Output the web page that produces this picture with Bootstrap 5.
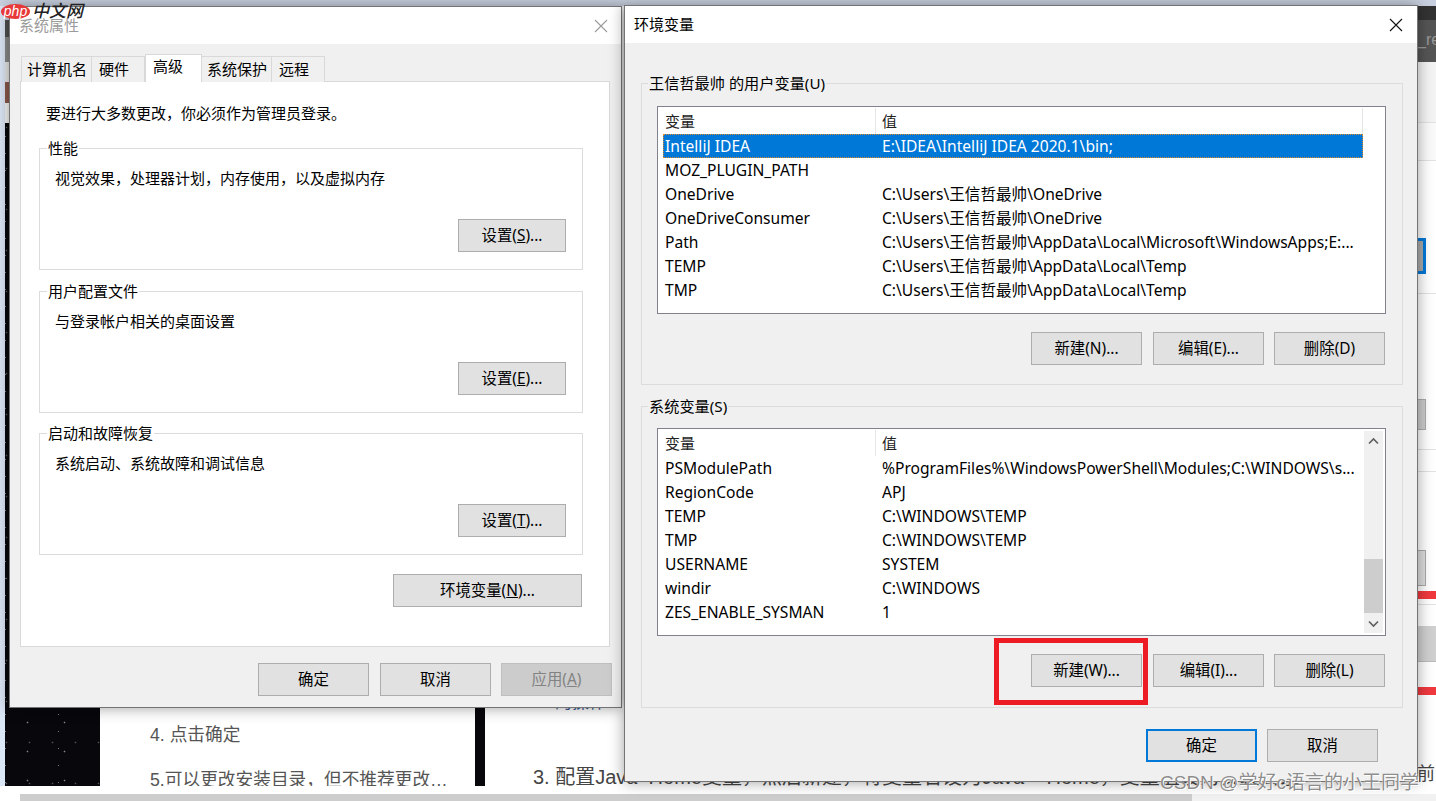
<!DOCTYPE html>
<html lang="zh-CN">
<head>
<meta charset="utf-8">
<title>环境变量</title>
<link href="https://cdn.jsdelivr.net/npm/bootstrap@5.3.0/dist/css/bootstrap.min.css" rel="stylesheet">
<style>
html,body{height:801px;overflow:hidden;background:#fff;}
body{position:relative;font-family:"Noto Sans","Noto Sans CJK SC",sans-serif;font-size:15px;color:#000;}
.top-strip{height:6px;background:#c9d1e0;}
.desk-main{height:780px;overflow:hidden;}
.left-edge{width:5px;background:#dbe6f6;}
.left-col{width:95px;background-color:#07070c;
 background-image:radial-gradient(circle,#8a8a8a 0 .7px,transparent 1.1px),radial-gradient(circle,#555 0 .7px,transparent 1.1px),radial-gradient(circle,#777 0 .6px,transparent 1px);
 background-size:37px 29px,23px 41px,53px 17px;background-position:4px 6px,13px 19px,27px 3px;}
.lc-a{height:14px;background:#c9d1e0;}
.lc-b{height:17px;background:#505050;}
.lc-c{height:25px;background:#8a8a8a;}
.lc-d{height:20px;background:#e8e8e8;}
.lc-e{height:21px;background:#8b5a4a;}
.lc-f{height:20px;background:#f6f6f6;}
.article-a{width:375px;background:#fff;padding:716px 0 0 50px;font-family:"Liberation Sans","Noto Sans CJK SC",sans-serif;font-size:17.7px;color:#555;line-height:26px;}
.article-a p{margin:0 0 19px;white-space:nowrap;}
.black-gap{width:10px;background:#07070c;}
.article-b{flex:1 1 auto;min-width:0;background:#fff;}
.article-b-text{width:932px;overflow:hidden;padding:684px 0 0 48px;font-family:"Liberation Sans","Noto Sans CJK SC",sans-serif;}
.frag{font-size:17px;line-height:26px;color:#3a5a90;margin:0 0 47px 22px;}
.long-line{font-size:20px;line-height:28px;color:#444;white-space:nowrap;margin:0;}
.right-col{width:19px;flex:none;overflow:hidden;background:#fff;font-family:"Liberation Sans","Noto Sans CJK SC",sans-serif;}
.rc-a{height:14px;background:#333;}
.rc-b{height:42px;background:#555;color:#999;font-size:16px;line-height:40px;white-space:nowrap;}
.rc-c{height:61px;background:#f4f4f4;border-bottom:1px solid #e2e2e2;}
.rc-d{height:38px;background:#fafafa;border-bottom:1px solid #e2e2e2;}
.rc-e{height:77px;}
.rc-f{width:9px;height:36px;background:#aaa;border:3px solid #0078d7;border-left:0;}
.rc-g{height:20px;border-bottom:1px solid #e2e2e2;}
.rc-h{height:105px;}
.rc-i{height:31px;width:9px;background:#ccc;border:1px solid #aaa;border-left:0;}
.rc-j{height:20px;border-bottom:1px solid #e2e2e2;}
.rc-k{height:22px;border-bottom:1px solid #e2e2e2;}
.rc-l{height:78px;}
.rc-m{height:36px;width:9px;background:#ddd;border:1px solid #aaa;border-left:0;}
.rc-n{height:5px;}
.rc-o{height:8px;background:#f0393f;}
.rc-p{height:6px;border-bottom:1px solid #e2e2e2;}
.rc-q{height:21px;}
.rc-r{height:36px;background:#d0d0d0;border-bottom:1px solid #bbb;}
.rc-s{height:25px;}
.rc-t{height:8px;background:#f0393f;}
.rc-u{height:89px;color:#444;font-size:18px;line-height:26px;padding-top:66px;}
.gap-strip{height:8px;background:#fff;}
.hbar{height:7px;background:#f1f1f1;}
.hbar-start{width:20px;background:#fff;}
.hbar-thumb{width:1172px;background:#cdcdcd;}

.win{position:absolute;background:#f0f0f0;border:1px solid #747474;box-shadow:0 0 14px rgba(0,0,0,.38);}
.win-1{left:9px;top:6px;width:613px;height:702px;}
.win-2{left:624px;top:5px;width:794px;height:777px;}
.title-bar{height:37px;background:#fff;line-height:37px;}
.title-1{padding:0 13px 0 9px;color:#9b9b9b;}
.title-2{padding:0 14px 0 9px;}
.win-tabs{padding:10px 0 0 11px;height:38px;}
.win-tab{height:26px;margin-top:2px;background:#f0f0f0;border:1px solid #d9d9d9;border-left:0;border-bottom:0;line-height:24px;white-space:nowrap;}
.win-tab-first{border-left:1px solid #d9d9d9;}
.tab-a{width:71px;padding-left:5px;}
.tab-b{width:53px;padding-left:7px;}
.tab-c{width:57px;padding-left:7px;}
.tab-d{width:70px;padding-left:5px;}
.win-tab-on{height:28px;margin-top:0;background:#fff;border-left:1px solid #d9d9d9;line-height:23px;position:relative;z-index:1;}
.win-panel{margin:-1px 0 0 10px;width:590px;height:566px;background:#fff;border:1px solid #d9d9d9;padding:21px 0 0 18px;}
.panel-note{margin:0 0 25px 7px;line-height:20px;height:20px;}
.grp{border:1px solid #dcdcdc;}
.grp-1{width:544px;height:122px;margin-bottom:21px;padding:0 16px 0 15px;}
.grp-tight{margin-bottom:20px;}
.grp-legend{display:block;width:max-content;margin:-11px 0 0 -8px;padding:0 1px;line-height:20px;height:20px;background:#fff;}
.grp-text{margin:10px 0 31px;line-height:20px;height:20px;}
.win-btn{width:111px;height:33px;padding:0;border-radius:0;background:#e1e1e1;border:1px solid #adadad;color:#000;font-size:15.4px;line-height:30px;font-family:inherit;}
.btn.win-btn:hover{background:#e1e1e1;border-color:#adadad;color:#000;}
.btn-108{width:108px;}
.btn-189{width:189px;}
.win-btn-off,.btn.win-btn-off:disabled{background:#ccc;border-color:#bfbfbf;color:#838383;opacity:1;}
.win-btn-def{border:2px solid #0078d7;}
.btn.win-btn-def:hover{border-color:#0078d7;}
.env-row{width:544px;padding-right:1px;margin-top:-2px;}
.foot-1{padding:16px 9px 0 0;gap:10px;}
.foot-1 .win-btn:first-child{margin-right:1px;}
.grp-stack{padding-top:40px;}
.grp-2{margin-left:16px;width:762px;height:302px;padding:22px 17px 0 15px;background:#f0f0f0;font-size:15.2px;}
.grp-2 .grp-legend{background:#f0f0f0;margin:-33px 0 13px -9px;}
.vars{height:208px;background:#fff;border:1px solid #82828f;width:729px;font-size:15.6px;margin-left:0;}
.vars-sys{margin-top:-1px;}
.vars-body{flex:1 1 auto;min-width:0;}
.vars-head{height:27px;padding-left:7px;color:#222;}
.vars-head span:first-child{width:211px;border-right:1px solid #e5e5e5;height:26px;margin-top:1px;line-height:26px;font-size:15px;}
.vars-head span:last-child{padding-left:6px;flex:1;border-right:1px solid #e5e5e5;height:26px;margin-top:1px;margin-right:22px;line-height:26px;font-size:15px;}
.vars-row{height:24px;line-height:24px;padding-left:7px;white-space:nowrap;}
.vars-row span:first-child{width:217px;flex:none;}
.vars-row span:last-child{white-space:nowrap;}
.vars-row-sel{background:#0078d7;color:#fff;outline:1px dotted #e08a2a;outline-offset:-1px;margin:0 22px 0 5px;padding-left:2px;}
.vbar{width:19px;margin:2px 2px 2px 0;background:#f0f0f0;flex:none;}
.vbar-track{flex:1 1 auto;padding-top:109px;}
.vbar-thumb{height:54px;background:#cdcdcd;}
.vbar-arrow{height:19px;}
.btn-row-2{padding-top:18px;gap:10px;}
.btn-row-2 .win-btn:first-child{margin-right:1px;}
.grp-gap{height:21px;}
.foot-2{padding:21px 39px 0 0;gap:10px;}
.red-box{position:absolute;left:994px;top:638px;width:154px;height:67px;border:5px solid #ed1c24;}
.php-logo{position:absolute;left:1px;top:4px;width:29px;height:15px;border-radius:50%;background:#e8393a;color:#fff;font:italic 14px/14px "Liberation Sans",sans-serif;text-align:center;}
.php-cn{position:absolute;left:32px;top:0;font:italic 500 17px/19px "Noto Sans CJK SC",sans-serif;color:#222;}
.mark-text{position:absolute;left:1160px;top:770px;font-size:19px;line-height:26px;color:rgba(110,110,110,.8);text-shadow:0 0 1px #fff,1px 1px 0 #fff;white-space:nowrap;font-family:"Liberation Sans","Noto Sans CJK SC",sans-serif;}
</style>
</head>
<body>
<div class="top-strip"></div>
<div class="desk-main d-flex">
  <div class="left-edge"></div>
  <div class="left-col">
    <div class="lc-a"></div><div class="lc-b"></div><div class="lc-c"></div><div class="lc-d"></div><div class="lc-e"></div><div class="lc-f"></div>
  </div>
  <div class="article-a">
    <p>4. 点击确定</p>
    <p>5.可以更改安装目录，但不推荐更改…</p>
  </div>
  <div class="black-gap"></div>
  <div class="article-b d-flex">
    <div class="article-b-text flex-grow-1">
      <p class="frag">的操作</p>
      <p class="long-line">3. 配置Java_Home变量，然后新建，将变量名设为Java__Home，变量值设为安装目录</p>
    </div>
    <div class="right-col">
      <div class="rc-a"></div>
      <div class="rc-b">_re</div>
      <div class="rc-c"></div>
      <div class="rc-d"></div>
      <div class="rc-e"></div>
      <div class="rc-f"></div>
      <div class="rc-g"></div>
      <div class="rc-h"></div>
      <div class="rc-i"></div>
      <div class="rc-j"></div>
      <div class="rc-k"></div>
      <div class="rc-l"></div>
      <div class="rc-m"></div>
      <div class="rc-n"></div>
      <div class="rc-o"></div>
      <div class="rc-p"></div>
      <div class="rc-q"></div>
      <div class="rc-r"></div>
      <div class="rc-s"></div>
      <div class="rc-t"></div>
      <div class="rc-u">前</div>
    </div>
  </div>
</div>
<div class="gap-strip"></div>
<div class="hbar d-flex"><div class="hbar-start"></div><div class="hbar-thumb"></div></div>

<div class="win win-1">
  <div class="title-bar title-1 d-flex justify-content-between align-items-center">
    <span>系统属性</span>
    <svg width="14" height="14" viewBox="0 0 14 14" aria-hidden="true"><path d="M1 1 13 13M13 1 1 13" stroke="#9b9b9b" stroke-width="1.1" fill="none"/></svg>
  </div>
  <div class="win-tabs d-flex align-items-start">
    <div class="win-tab win-tab-first tab-a">计算机名</div>
    <div class="win-tab tab-b">硬件</div>
    <div class="win-tab win-tab-on tab-c">高级</div>
    <div class="win-tab tab-d">系统保护</div>
    <div class="win-tab tab-b">远程</div>
  </div>
  <div class="win-panel">
    <div class="panel-note">要进行大多数更改，你必须作为管理员登录。</div>
    <div class="grp grp-1">
      <span class="grp-legend">性能</span>
      <div class="grp-text">视觉效果，处理器计划，内存使用，以及虚拟内存</div>
      <div class="text-end"><button type="button" class="btn win-btn btn-108">设置(<u>S</u>)...</button></div>
    </div>
    <div class="grp grp-1 grp-tight">
      <span class="grp-legend">用户配置文件</span>
      <div class="grp-text">与登录帐户相关的桌面设置</div>
      <div class="text-end"><button type="button" class="btn win-btn btn-108">设置(<u>E</u>)...</button></div>
    </div>
    <div class="grp grp-1">
      <span class="grp-legend">启动和故障恢复</span>
      <div class="grp-text">系统启动、系统故障和调试信息</div>
      <div class="text-end"><button type="button" class="btn win-btn btn-108">设置(<u>T</u>)...</button></div>
    </div>
    <div class="env-row text-end"><button type="button" class="btn win-btn btn-189">环境变量(<u>N</u>)...</button></div>
  </div>
  <div class="foot-1 d-flex justify-content-end">
    <button type="button" class="btn win-btn">确定</button>
    <button type="button" class="btn win-btn">取消</button>
    <button type="button" class="btn win-btn win-btn-off" disabled>应用(<u>A</u>)</button>
  </div>
</div>

<div class="win win-2">
  <div class="title-bar title-2 d-flex justify-content-between align-items-center">
    <span>环境变量</span>
    <svg width="14" height="14" viewBox="0 0 14 14" aria-hidden="true"><path d="M1 1 13 13M13 1 1 13" stroke="#111" stroke-width="1.1" fill="none"/></svg>
  </div>
  <div class="grp-stack">
  <div class="grp grp-2">
    <span class="grp-legend">王信哲最帅 的用户变量(U)</span>
    <div class="vars">
      <div class="vars-head d-flex"><span>变量</span><span>值</span></div>
      <div class="vars-row vars-row-sel d-flex"><span>IntelliJ IDEA</span><span>E:\IDEA\IntelliJ IDEA 2020.1\bin;</span></div>
      <div class="vars-row d-flex"><span>MOZ_PLUGIN_PATH</span><span></span></div>
      <div class="vars-row d-flex"><span>OneDrive</span><span>C:\Users\王信哲最帅\OneDrive</span></div>
      <div class="vars-row d-flex"><span>OneDriveConsumer</span><span>C:\Users\王信哲最帅\OneDrive</span></div>
      <div class="vars-row d-flex"><span>Path</span><span>C:\Users\王信哲最帅\AppData\Local\Microsoft\WindowsApps;E:...</span></div>
      <div class="vars-row d-flex"><span>TEMP</span><span>C:\Users\王信哲最帅\AppData\Local\Temp</span></div>
      <div class="vars-row d-flex"><span>TMP</span><span>C:\Users\王信哲最帅\AppData\Local\Temp</span></div>
    </div>
    <div class="btn-row-2 d-flex justify-content-end">
      <button type="button" class="btn win-btn">新建(N)...</button>
      <button type="button" class="btn win-btn">编辑(E)...</button>
      <button type="button" class="btn win-btn">删除(D)</button>
    </div>
  </div>
  <div class="grp-gap"></div>
  <div class="grp grp-2">
    <span class="grp-legend">系统变量(S)</span>
    <div class="vars vars-sys d-flex">
      <div class="vars-body">
        <div class="vars-head d-flex"><span>变量</span><span class="me-0 border-0">值</span></div>
        <div class="vars-row d-flex"><span>PSModulePath</span><span>%ProgramFiles%\WindowsPowerShell\Modules;C:\WINDOWS\s...</span></div>
        <div class="vars-row d-flex"><span>RegionCode</span><span>APJ</span></div>
        <div class="vars-row d-flex"><span>TEMP</span><span>C:\WINDOWS\TEMP</span></div>
        <div class="vars-row d-flex"><span>TMP</span><span>C:\WINDOWS\TEMP</span></div>
        <div class="vars-row d-flex"><span>USERNAME</span><span>SYSTEM</span></div>
        <div class="vars-row d-flex"><span>windir</span><span>C:\WINDOWS</span></div>
        <div class="vars-row d-flex"><span>ZES_ENABLE_SYSMAN</span><span>1</span></div>
      </div>
      <div class="vbar d-flex flex-column">
        <div class="vbar-arrow d-flex align-items-center justify-content-center"><svg width="11" height="8" viewBox="0 0 11 8" aria-hidden="true"><path d="M1 6.5 5.5 2 10 6.5" stroke="#606060" stroke-width="1.7" fill="none"/></svg></div>
        <div class="vbar-track"><div class="vbar-thumb"></div></div>
        <div class="vbar-arrow d-flex align-items-center justify-content-center"><svg width="11" height="8" viewBox="0 0 11 8" aria-hidden="true"><path d="M1 1.5 5.5 6 10 1.5" stroke="#606060" stroke-width="1.7" fill="none"/></svg></div>
      </div>
    </div>
    <div class="btn-row-2 d-flex justify-content-end">
      <button type="button" class="btn win-btn">新建(W)...</button>
      <button type="button" class="btn win-btn">编辑(I)...</button>
      <button type="button" class="btn win-btn">删除(L)</button>
    </div>
  </div>
  </div>
  <div class="foot-2 d-flex justify-content-end">
    <button type="button" class="btn win-btn win-btn-def">确定</button>
    <button type="button" class="btn win-btn">取消</button>
  </div>
</div>

<div class="red-box"></div>
<div class="php-logo">php</div>
<div class="php-cn">中文网</div>
<div class="mark-text">CSDN @学好c语言的小王同学</div>
<script src="https://cdn.jsdelivr.net/npm/bootstrap@5.3.0/dist/js/bootstrap.bundle.min.js"></script>
</body>
</html>
